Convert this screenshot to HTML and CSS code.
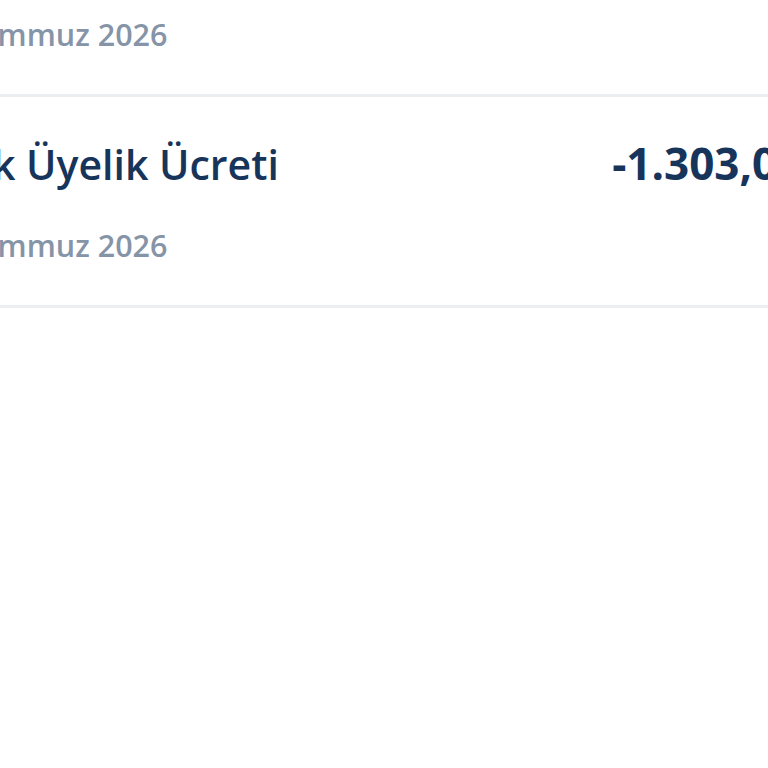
FILE: index.html
```html
<!DOCTYPE html>
<html lang="tr">
<head>
    <meta charset="UTF-8">
    <meta name="viewport" content="width=device-width, initial-scale=1.0">
    <title>Hesap Hareketleri</title>
    <link rel="stylesheet" href="styles.css">
</head>
<body>
<div class="list">
    <div class="row">
        <div class="row-top">
            <span class="title">Aylık Üyelik Ücreti</span>
            <span class="amount">-1.303,00 ₺</span>
        </div>
        <div class="date">15 Temmuz 2026</div>
    </div>
    <div class="row">
        <div class="row-top">
            <span class="title">Aylık Üyelik Ücreti</span>
            <span class="amount">-1.303,00 ₺</span>
        </div>
        <div class="date">15 Temmuz 2026</div>
    </div>
</div>
</body>
</html>
```

FILE: styles.css
```css
body {
    margin: 0;
    overflow: hidden;
    background: #ffffff;
    font-family: "Open Sans", "Noto Sans", sans-serif;
}
.list {
    margin-top: -114px;
    margin-left: -80px;
    width: 919px;
}
.row {
    padding: 41px 0 40px;
    border-bottom: 3px solid #eceff2;
}
.row-top {
    display: flex;
    justify-content: space-between;
    align-items: baseline;
    line-height: 52px;
}
.title {
    font-size: 41px;
    font-weight: 600;
    color: #17345b;
}
.amount {
    font-size: 44px;
    line-height: 48px;
    font-weight: 700;
    color: #17345b;
}
.date {
    margin-top: 35px;
    font-size: 30.5px;
    line-height: 40px;
    font-weight: 600;
    color: #8694a7;
}
```
